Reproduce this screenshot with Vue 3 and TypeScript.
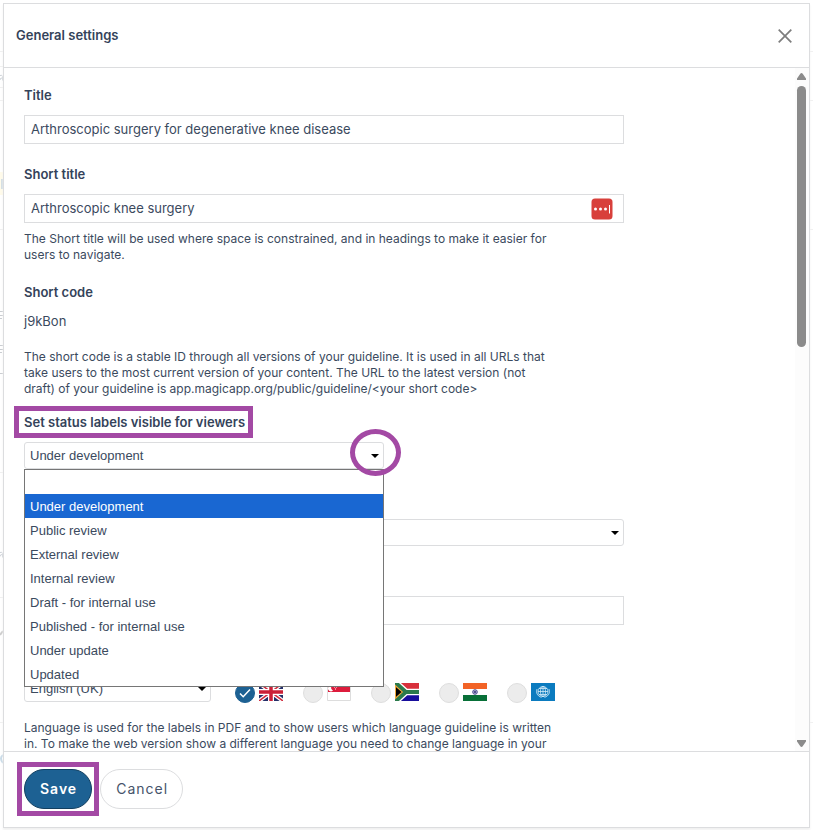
<script setup lang="ts">
import { ref } from 'vue'

const title = ref('Arthroscopic surgery for degenerative knee disease')
const shortTitle = ref('Arthroscopic knee surgery')
const status = ref('Under development')
const organization = ref('')
const extra = ref('')
const language = ref('English (UK)')
const region = ref('gb')

const statuses: string[] = [
  '',
  'Under development',
  'Public review',
  'External review',
  'Internal review',
  'Draft - for internal use',
  'Published - for internal use',
  'Under update',
  'Updated',
]

const regions: { id: string; name: string }[] = [
  { id: 'gb', name: 'United Kingdom' },
  { id: 'sg', name: 'Singapore' },
  { id: 'za', name: 'South Africa' },
  { id: 'in', name: 'India' },
  { id: 'who', name: 'World Health Organization' },
]
</script>

<template>
  <div class="page">
    <div class="behind" aria-hidden="true">
      <svg class="rules" viewBox="0 0 813 830" preserveAspectRatio="none">
        <path d="M0 51.5H813M0 66.5H3M0 87.5H3M0 100.5H813M0 229.5H813M0 472.5H3M0 597.5H3M0 722.5H813" stroke="#f0f0f0" />
        <path d="M0 172h3v23H0z" fill="#fffbea" />
        <path d="M1 179h2v10H1z" fill="#d3dee3" />
        <path d="M0 75.500q2-1 2.500 1v4M2 78q-2 0-2 2M0 552.500q2-1 2.500 1v4M2 554.500q-2 0-2 2" fill="none" stroke="#cdd2d8" />
        <path d="M0 311.500h3M0 315.500h3M0 318.500h2M0 345.500h3M0 349.500h3M0 352.500h2M0 373.500h3" stroke="#c9ccd0" />
        <path d="M0 635l3-4" stroke="#ccc" stroke-width="2" />
        <path d="M3 755q-4 3 0 8" fill="none" stroke="#c9dbe8" stroke-width="2" />
      </svg>
    </div>

    <form class="dialog" role="dialog" aria-labelledby="dialog-title" @submit.prevent>
      <header class="head">
        <h1 id="dialog-title">General settings</h1>
        <button class="close" type="button" aria-label="Close">
          <svg viewBox="0 0 14 14" width="14" height="14"><path d="M.7.7l12.600 12.600M13.300.7L.7 13.300" stroke="#7d7d7d" stroke-width="1.700" /></svg>
        </button>
      </header>

      <div class="body">
        <div class="content">
          <div class="field">
            <label for="title">Title</label>
            <input id="title" v-model="title" class="text" type="text" />
          </div>

          <div class="field short">
            <label for="short-title">Short title</label>
            <div class="wrap">
              <input id="short-title" v-model="shortTitle" class="text" type="text" />
              <svg class="filler" viewBox="0 0 22 22" width="22" height="22">
                <rect x=".5" y=".5" width="21" height="21" rx="3.500" fill="#d8403b" />
                <circle cx="4.500" cy="11" r="1.500" fill="#fff" />
                <circle cx="9.500" cy="11" r="1.500" fill="#fff" />
                <circle cx="14.500" cy="11" r="1.500" fill="#fff" />
                <path d="M18.500 7v8.500" stroke="#fff" />
              </svg>
            </div>
            <p class="help">The Short title will be used where space is constrained, and in headings to make it easier for users to navigate.</p>
          </div>

          <div class="field code">
            <h2>Short code</h2>
            <p class="value">j9kBon</p>
            <p class="help">The short code is a stable ID through all versions of your guideline. It is used in all URLs that take users to the most current version of your content. The URL to the latest version (not draft) of your guideline is app.magicapp.org/public/guideline/&lt;your short code&gt;</p>
          </div>

          <div class="field status">
            <label class="marked" for="status">Set status labels visible for viewers</label>
            <div class="wrap picker">
              <select id="status" v-model="status">
                <option v-for="s in statuses" :key="s" :value="s">{{ s }}</option>
              </select>
              <svg class="caret" viewBox="0 0 8 4" width="8" height="4"><path d="M0 0h8L4 4z" /></svg>
              <ul class="options" role="listbox">
                <li v-for="s in statuses" :key="s" role="option" :aria-selected="s === status" :class="{ on: s === status }">{{ s }}</li>
              </ul>
              <span class="ring"></span>
            </div>
          </div>

          <div class="wrap organization">
            <select v-model="organization" aria-label="Organization">
              <option value=""></option>
            </select>
            <svg class="caret" viewBox="0 0 8 4" width="8" height="4"><path d="M0 0h8L4 4z" /></svg>
          </div>

          <input v-model="extra" class="text extra" type="text" aria-label="Additional details" />

          <div class="languages">
            <div class="wrap language">
              <select v-model="language" aria-label="Language">
                <option>English (UK)</option>
              </select>
              <svg class="caret" viewBox="0 0 8 4" width="8" height="4"><path d="M0 0h8L4 4z" /></svg>
            </div>
            <div class="regions">
              <label v-for="r in regions" :key="r.id" class="region">
                <span class="tick">
                  <input v-model="region" type="radio" name="region" :value="r.id" :aria-label="r.name" />
                  <svg v-if="region === r.id" viewBox="0 0 20 20" width="20" height="20"><path d="M5 10.500l3.200 3.200L15 6.500" fill="none" stroke="#fff" stroke-width="1.500" /></svg>
                </span>
                <svg v-if="r.id === 'gb'" viewBox="0 0 24 18" width="24" height="18">
                  <path d="M0 0h24v18H0z" fill="#252f68" />
                  <path d="M0 0l24 18M24 0L0 18" stroke="#fff" stroke-width="4" />
                  <path d="M0 0l24 18M24 0L0 18" stroke="#d02b3d" stroke-width="1.500" />
                  <path d="M12 0v18M0 9h24" stroke="#fff" stroke-width="6" />
                  <path d="M12 0v18M0 9h24" stroke="#cb2037" stroke-width="3.500" />
                </svg>
                <svg v-else-if="r.id === 'sg'" viewBox="0 0 24 18" width="24" height="18">
                  <path d="M.5.5h23v17H.5z" fill="#fff" stroke="#ddd" />
                  <path d="M1 0h22v9H1z" fill="#dd1c3c" />
                  <path d="M5 2.500a3 3 0 1 0 1 5a3 3 0 0 1-1-5" fill="#fff" />
                  <path d="M7 4h1M9 4h1M8 6h1" stroke="#fff" />
                </svg>
                <svg v-else-if="r.id === 'za'" viewBox="0 0 24 18" width="24" height="18">
                  <path d="M0 0h24v9H0z" fill="#d8303b" />
                  <path d="M0 9h24v9H0z" fill="#180f9c" />
                  <path d="M0-1l11 10L0 19M11 9h13" fill="none" stroke="#fff" stroke-width="6.500" />
                  <path d="M0 2l8 7-8 7z" fill="#000" stroke="#eda63a" stroke-width="2" />
                  <path d="M0-1l11 10L0 19M11 9h13" fill="none" stroke="#2b7a4b" stroke-width="3.800" />
                </svg>
                <svg v-else-if="r.id === 'in'" viewBox="0 0 24 18" width="24" height="18">
                  <path d="M0 0h24v18H0z" fill="#fff" />
                  <path d="M0 0h24v6H0z" fill="#f26326" />
                  <path d="M0 12h24v6H0z" fill="#087038" />
                  <circle cx="12" cy="9" r="2.300" fill="#b8b8da" stroke="#4b4b91" />
                  <circle cx="12" cy="9" r="1" fill="#303078" />
                </svg>
                <svg v-else viewBox="0 0 24 18" width="24" height="18">
                  <path d="M0 0h24v18H0z" fill="#0b7bbf" />
                  <g fill="none" stroke="#d3ebf7" stroke-width=".8">
                    <circle cx="12" cy="8.500" r="5" />
                    <ellipse cx="12" cy="8.500" rx="2.500" ry="5" />
                    <path d="M12 3v11M7 8.500h10M8 5.500h8M8 11.500h8" />
                    <path d="M6 6q-2 6 4.500 8.500M18 6q2 6-4.500 8.500" />
                  </g>
                </svg>
              </label>
            </div>
          </div>
          <p class="help">Language is used for the labels in PDF and to show users which language guideline is written in. To make the web version show a different language you need to change language in your</p>
        </div>

        <div class="scrollbar" aria-hidden="true">
          <svg viewBox="0 0 9 7" width="9" height="7"><path d="M4.500 0Q5.200 0 5.700.8L9 5.500V7H0V5.500L3.300.8Q3.800 0 4.500 0z" /></svg>
          <span class="thumb"></span>
          <svg class="down" viewBox="0 0 9 7" width="9" height="7"><path d="M4.500 7Q5.200 7 5.700 6.200L9 1.500V0H0V1.500L3.300 6.200Q3.800 7 4.500 7z" /></svg>
        </div>
      </div>

      <footer class="foot">
        <span class="frame"><button class="btn save" type="submit">Save</button></span>
        <button class="btn" type="button">Cancel</button>
      </footer>
    </form>
  </div>
</template>

<style>
body {
  background: #fff;
}
</style>

<style scoped>
* {
  box-sizing: border-box;
}
.page {
  position: relative;
  display: flex;
  height: 100vh;
  padding: 3px 3px 2px;
  overflow: hidden;
  color: #3b4a5e;
  font-family: Inter, "Liberation Sans", sans-serif;
  font-size: 13px;
  line-height: 16px;
}
.behind {
  position: absolute;
  inset: 0;
}
.rules {
  display: block;
  width: 100%;
  height: 100%;
}
.dialog {
  position: relative;
  flex: 1;
  min-width: 0;
  display: flex;
  flex-direction: column;
  background: #fff;
  border: 1px solid #dcdddf;
  box-shadow: 0 2px 2px #f1f1f1;
}
h1,
h2,
p,
ul {
  margin: 0;
  padding: 0;
}
h1,
h2,
.field > label {
  color: #34435a;
  font-size: 13px;
  font-weight: 600;
}
.head {
  display: flex;
  align-items: center;
  justify-content: space-between;
  height: 64px;
  padding: 0 17px 2px 12px;
  border-bottom: 1px solid #dcdddf;
}
.close {
  display: flex;
  padding: 2px 0 0;
  border: 0;
  background: none;
}
.body {
  flex: 1;
  min-height: 0;
  display: flex;
  overflow: hidden;
}
.content {
  flex: 1;
  min-width: 0;
  padding: 19px 20px 0;
}
.field {
  display: flex;
  flex-direction: column;
  align-items: flex-start;
  max-width: 600px;
  margin-bottom: 22px;
}
.field > label {
  margin-bottom: 12px;
}
.wrap {
  position: relative;
  width: 100%;
}
.text {
  display: block;
  width: 100%;
  height: 29px;
  padding: 0 6px 1px;
  border: 1px solid #dcdddf;
  border-radius: 0;
  background: #fff;
  color: inherit;
  font: inherit;
  outline: 0;
}
.filler {
  position: absolute;
  top: 4px;
  right: 11px;
}
.help {
  max-width: 530px;
  font-size: 12px;
  line-height: 16px;
}
.field .help {
  margin-top: 8px;
}
.field.short {
  margin-bottom: 21px;
}
.field.code {
  margin-bottom: 14px;
}
.value {
  margin-top: 13px;
}
.field.code .help {
  margin-top: 20px;
}
.field.status {
  margin-bottom: 50px;
}
.field > .marked {
  margin: 0 -5px 9px;
  padding: 0 3px 0 5px;
  line-height: 22px;
  outline: 5px solid #a349a4;
}
.picker {
  max-width: 360px;
}
select {
  display: block;
  width: 100%;
  height: 27px;
  padding: 0 20px 0 5px;
  border: 1px solid #dcdddf;
  border-radius: 3px;
  appearance: none;
  background: #fff;
  color: inherit;
  font: 13px "Liberation Sans", Arial, sans-serif;
  outline: 0;
}
.caret {
  position: absolute;
  top: 12px;
  right: 5px;
}
.options {
  position: absolute;
  z-index: 2;
  top: 27px;
  left: 0;
  width: 100%;
  border: 1px solid #767676;
  background: #fff;
  font: 13px/23px "Liberation Sans", Arial, sans-serif;
  list-style: none;
}
.options li {
  height: 24px;
  padding: 1px 5px 0;
}
.options .on {
  background: #1967d2;
  color: #fff;
}
.ring {
  position: absolute;
  z-index: 3;
  top: -13px;
  right: -17px;
  width: 51px;
  height: 47px;
  border: 5px solid #a349a4;
  border-radius: 50%;
}
.organization,
.extra {
  max-width: 600px;
  margin-bottom: 50px;
}
.languages {
  display: flex;
  gap: 24px;
  margin-bottom: 17px;
}
.language {
  width: 187px;
}
.regions {
  display: flex;
  gap: 20px;
  padding-top: 8px;
}
.region {
  display: flex;
  gap: 4px;
}
.tick {
  position: relative;
  width: 20px;
  height: 20px;
}
.tick input {
  display: block;
  width: 20px;
  height: 20px;
  margin: 0;
  border: 1px solid #dedede;
  border-radius: 50%;
  appearance: none;
  background: #ececec;
}
.tick input:checked {
  border-color: #1d6193;
  background: #1d6193;
}
.tick svg {
  position: absolute;
  inset: 0;
}
.scrollbar {
  display: flex;
  flex-direction: column;
  align-items: center;
  width: 14px;
  padding: 5px 1px 4px 0;
  background: #fcfcfc;
  fill: #8b8b8b;
}
.thumb {
  width: 9px;
  height: 261px;
  margin-top: 6px;
  border-radius: 5px;
  background: #8b8b8b;
}
.down {
  margin-top: auto;
}
.foot {
  position: relative;
  display: flex;
  gap: 8px;
  padding: 17px 20px 18px;
  border-top: 1px solid #dcdddf;
  background: #fff;
}
.frame {
  display: flex;
  margin: -7px;
  padding: 2px;
  border: 5px solid #a349a4;
}
.btn {
  height: 40px;
  padding: 0 14px 0 15px;
  border: 1px solid #dcdddf;
  border-radius: 20px;
  background: #fff;
  color: #45536a;
  font: 14px/20px Inter, "Liberation Sans", sans-serif;
  letter-spacing: 1px;
}
.save {
  border-color: #123f60;
  background: #1d6193;
  color: #fff;
  font-weight: 600;
}
</style>
